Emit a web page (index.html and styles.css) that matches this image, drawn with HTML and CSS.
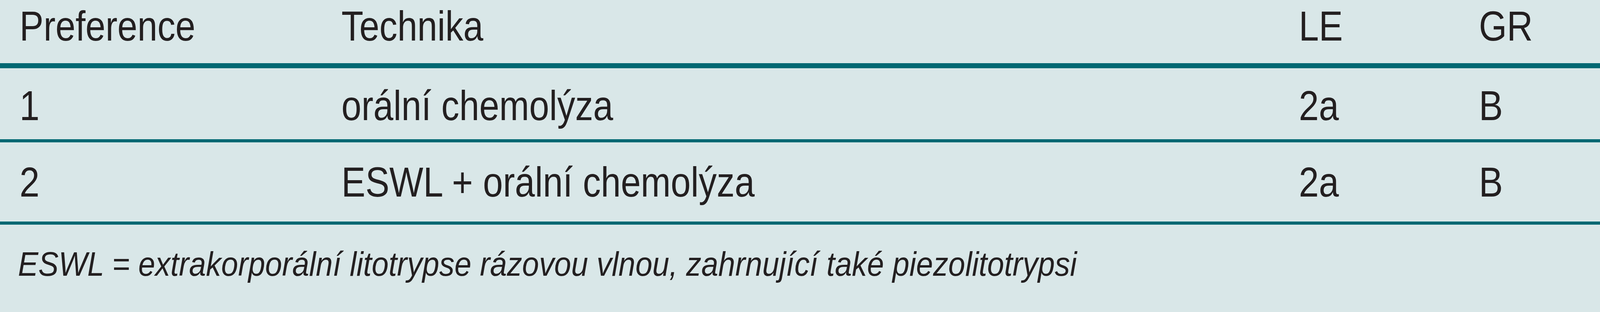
FILE: index.html
```html
<!DOCTYPE html>
<html lang="cs">
<head>
<meta charset="utf-8">
<title>Tabulka</title>
<link rel="stylesheet" href="styles.css">
</head>
<body>
<div class="table">
  <div class="row head">
    <div class="cell">Preference</div>
    <div class="cell">Technika</div>
    <div class="cell">LE</div>
    <div class="cell">GR</div>
  </div>
  <div class="row r1">
    <div class="cell">1</div>
    <div class="cell">orální chemolýza</div>
    <div class="cell">2a</div>
    <div class="cell">B</div>
  </div>
  <div class="row r2">
    <div class="cell">2</div>
    <div class="cell">ESWL + orální chemolýza</div>
    <div class="cell">2a</div>
    <div class="cell">B</div>
  </div>
  <div class="note"><span class="note-text">ESWL = extrakorporální litotrypse rázovou vlnou, zahrnující také piezolitotrypsi</span></div>
</div>
</body>
</html>
```

FILE: styles.css
```css
html, body {
  margin: 0;
  padding: 0;
  background: #d9e7e8;
}

.table {
  width: 4126px;
  height: 800px;
  background: #d9e7e8;
  color: #231f20;
  font-family: "Liberation Sans", Arial, sans-serif;
}

.row {
  display: grid;
  grid-template-columns: 824px 2451px 461px 1fr;
  padding-left: 50px;
  font-size: 107px;
  line-height: 107px;
  box-sizing: border-box;
}

.head {
  height: 175px;
  padding-top: 14px;
  border-bottom: 13px solid #006872;
}

.r1 {
  height: 190px;
  padding-top: 43px;
  border-bottom: 8px solid #006872;
}

.r2 {
  height: 211px;
  padding-top: 49px;
  border-bottom: 8px solid #006872;
}

.cell {
  white-space: nowrap;
  transform: scaleX(0.86);
  transform-origin: left center;
}

.note {
  padding-left: 46px;
  padding-top: 57px;
  font-size: 88px;
  line-height: 88px;
  font-style: italic;
  white-space: nowrap;
}

.note-text {
  display: inline-block;
  transform: scaleX(0.885);
  transform-origin: left center;
}
```
